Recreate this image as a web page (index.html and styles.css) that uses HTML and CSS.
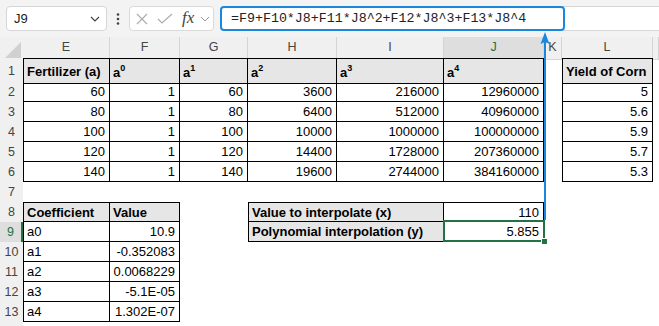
FILE: index.html
```html
<!DOCTYPE html>
<html lang="en">
<head>
    <meta charset="UTF-8">
    <meta name="viewport" content="width=device-width, initial-scale=1.0">
    <title>Polynomial interpolation</title>
    <link rel="stylesheet" href="styles.css">
</head>
<body>
<div class="app">
    <!-- Name box and formula bar -->
    <div class="toolbar">
        <div class="namebox">
            <span>J9</span>
            <svg width="10" height="6" viewBox="0 0 10 6"><path d="M1 1 L5 5 L9 1" fill="none" stroke="#444" stroke-width="1.2"/></svg>
        </div>
        <div class="dots">
            <svg width="4" height="12" viewBox="0 0 4 12"><circle cx="2" cy="1.5" r="1.3" fill="#444"/><circle cx="2" cy="6" r="1.3" fill="#444"/><circle cx="2" cy="10.5" r="1.3" fill="#444"/></svg>
        </div>
        <div class="fxbox">
            <svg class="ico-x" width="12" height="12" viewBox="0 0 12 12"><path d="M1 1 L11 11 M11 1 L1 11" stroke="#ababab" stroke-width="1.1"/></svg>
            <svg class="ico-ok" width="16" height="11" viewBox="0 0 16 11"><path d="M1 6 L5 10 L15 1" fill="none" stroke="#ababab" stroke-width="1.1"/></svg>
            <span class="fx">fx</span>
            <svg class="ico-dd" width="10" height="6" viewBox="0 0 10 6"><path d="M1 1 L5 5 L9 1" fill="none" stroke="#999" stroke-width="1"/></svg>
        </div>
        <div class="formula">
            <div class="formula-input">=F9+F10*J8+F11*J8^2+F12*J8^3+F13*J8^4</div>
        </div>
    </div>

    <!-- Sheet -->
    <div class="sheet">
        <div class="row hdr">
            <div class="corner"><svg width="16" height="16" viewBox="0 0 16 16"><polygon points="16,0 16,16 0,16" fill="#d0d0d0"/></svg></div>
            <div class="ch">E</div>
            <div class="ch">F</div>
            <div class="ch">G</div>
            <div class="ch">H</div>
            <div class="ch">I</div>
            <div class="ch sel">J</div>
            <div class="ch">K</div>
            <div class="ch">L</div>
            <div class="ch"></div>
        </div>

        <div class="row r1">
            <div class="rh">1</div>
            <div class="c t tt tl g b">Fertilizer (a)</div>
            <div class="c t tt g b">a<sup>0</sup></div>
            <div class="c t tt g b">a<sup>1</sup></div>
            <div class="c t tt g b">a<sup>2</sup></div>
            <div class="c t tt g b">a<sup>3</sup></div>
            <div class="c t tt g b">a<sup>4</sup></div>
            <div class="c"></div>
            <div class="c t tt tl g b">Yield of Corn</div>
            <div class="c"></div>
        </div>
        <div class="row">
            <div class="rh">2</div>
            <div class="c t tl n">60</div>
            <div class="c t n">1</div>
            <div class="c t n">60</div>
            <div class="c t n">3600</div>
            <div class="c t n">216000</div>
            <div class="c t n">12960000</div>
            <div class="c"></div>
            <div class="c t tl n">5</div>
            <div class="c"></div>
        </div>
        <div class="row">
            <div class="rh">3</div>
            <div class="c t tl n">80</div>
            <div class="c t n">1</div>
            <div class="c t n">80</div>
            <div class="c t n">6400</div>
            <div class="c t n">512000</div>
            <div class="c t n">40960000</div>
            <div class="c"></div>
            <div class="c t tl n">5.6</div>
            <div class="c"></div>
        </div>
        <div class="row">
            <div class="rh">4</div>
            <div class="c t tl n">100</div>
            <div class="c t n">1</div>
            <div class="c t n">100</div>
            <div class="c t n">10000</div>
            <div class="c t n">1000000</div>
            <div class="c t n">100000000</div>
            <div class="c"></div>
            <div class="c t tl n">5.9</div>
            <div class="c"></div>
        </div>
        <div class="row">
            <div class="rh">5</div>
            <div class="c t tl n">120</div>
            <div class="c t n">1</div>
            <div class="c t n">120</div>
            <div class="c t n">14400</div>
            <div class="c t n">1728000</div>
            <div class="c t n">207360000</div>
            <div class="c"></div>
            <div class="c t tl n">5.7</div>
            <div class="c"></div>
        </div>
        <div class="row">
            <div class="rh">6</div>
            <div class="c t tl n">140</div>
            <div class="c t n">1</div>
            <div class="c t n">140</div>
            <div class="c t n">19600</div>
            <div class="c t n">2744000</div>
            <div class="c t n">384160000</div>
            <div class="c"></div>
            <div class="c t tl n">5.3</div>
            <div class="c"></div>
        </div>
        <div class="row">
            <div class="rh">7</div>
            <div class="c"></div><div class="c"></div><div class="c"></div><div class="c"></div>
            <div class="c"></div><div class="c"></div><div class="c"></div><div class="c"></div><div class="c"></div>
        </div>
        <div class="row">
            <div class="rh">8</div>
            <div class="c t tt tl g b">Coefficient</div>
            <div class="c t tt g b">Value</div>
            <div class="c"></div>
            <div class="c t tt tl g b span2">Value to interpolate (x)</div>
            <div class="c t tt n">110</div>
            <div class="c"></div>
            <div class="c"></div>
            <div class="c"></div>
        </div>
        <div class="row">
            <div class="rh sel">9</div>
            <div class="c t tl">a0</div>
            <div class="c t n">10.9</div>
            <div class="c"></div>
            <div class="c t tl g b span2">Polynomial interpolation (y)</div>
            <div class="c t n active">5.855</div>
            <div class="c"></div>
            <div class="c"></div>
            <div class="c"></div>
        </div>
        <div class="row">
            <div class="rh">10</div>
            <div class="c t tl">a1</div>
            <div class="c t n">-0.352083</div>
            <div class="c"></div><div class="c"></div><div class="c"></div><div class="c"></div>
            <div class="c"></div><div class="c"></div><div class="c"></div>
        </div>
        <div class="row">
            <div class="rh">11</div>
            <div class="c t tl">a2</div>
            <div class="c t n">0.0068229</div>
            <div class="c"></div><div class="c"></div><div class="c"></div><div class="c"></div>
            <div class="c"></div><div class="c"></div><div class="c"></div>
        </div>
        <div class="row">
            <div class="rh">12</div>
            <div class="c t tl">a3</div>
            <div class="c t n">-5.1E-05</div>
            <div class="c"></div><div class="c"></div><div class="c"></div><div class="c"></div>
            <div class="c"></div><div class="c"></div><div class="c"></div>
        </div>
        <div class="row">
            <div class="rh">13</div>
            <div class="c t tl">a4</div>
            <div class="c t n">1.302E-07</div>
            <div class="c"></div><div class="c"></div><div class="c"></div><div class="c"></div>
            <div class="c"></div><div class="c"></div><div class="c"></div>
        </div>
        <div class="row">
            <div class="rh"></div>
            <div class="c"></div><div class="c"></div><div class="c"></div><div class="c"></div>
            <div class="c"></div><div class="c"></div><div class="c"></div><div class="c"></div><div class="c"></div>
        </div>
    </div>

    <!-- Callout arrow from J9 to the formula -->
    <svg class="arrow" width="10" height="188" viewBox="0 0 10 188">
        <polygon points="5,0 0.5,12 5,10 9.5,12" fill="#1b87dc"/>
        <rect x="4" y="9" width="2" height="179" fill="#1b87dc"/>
    </svg>
</div>
</body>
</html>
```

FILE: styles.css
```css
body {
    margin: 0;
    font-family: "Liberation Sans", Arial, sans-serif;
}
.app {
    position: relative;
    width: 659px;
    height: 326px;
    overflow: hidden;
    background-color: #fff;
}

/* toolbar */
.toolbar {
    display: flex;
    align-items: flex-start;
    height: 37px;
    box-sizing: border-box;
    padding: 6px 0 0 6px;
    background-color: #f3f3f3;
}
.namebox {
    width: 101px;
    height: 25px;
    box-sizing: border-box;
    display: flex;
    align-items: center;
    justify-content: space-between;
    padding: 0 6px 0 7px;
    background-color: #fff;
    border: 1px solid #d6d6d6;
    border-radius: 4px;
    font-size: 13px;
    color: #222;
}
.dots {
    width: 22px;
    display: flex;
    justify-content: center;
    padding-top: 7px;
}
.fxbox {
    width: 85px;
    height: 25px;
    box-sizing: border-box;
    display: flex;
    align-items: center;
    padding-left: 6px;
    background-color: #fff;
    border: 1px solid #dadada;
    border-radius: 4px;
}
.ico-x {
    margin-right: 9px;
}
.ico-ok {
    margin-right: 9px;
}
.fx {
    font-family: "Liberation Serif", serif;
    font-style: italic;
    font-size: 17px;
    color: #444;
    width: 17px;
    margin-top: -2px;
}
.ico-dd {
    margin-left: 1px;
}
.formula {
    flex: 1;
    margin-left: 6px;
    margin-right: -10px;
    height: 25px;
    box-sizing: border-box;
    background-color: #fff;
    border: 1px solid #d6d6d6;
    border-radius: 4px;
}
.formula-input {
    width: 345px;
    height: 25px;
    box-sizing: border-box;
    margin: -1px 0 0 -1px;
    padding-left: 9px;
    border: 2px solid #1b87dc;
    border-radius: 4px;
    font-family: "Liberation Mono", monospace;
    font-size: 13.3px;
    line-height: 21px;
    color: #222;
}

/* sheet */
.row {
    display: grid;
    grid-template-columns: 23px 87px 70px 68px 89px 107px 100px 18px 91px 1fr;
    height: 20px;
}
.row.hdr {
    height: 21px;
}
.row.r1 {
    height: 24px;
}
.corner {
    background-color: #f0f0f0;
    display: flex;
    align-items: flex-end;
    justify-content: flex-end;
    padding: 0 2px 2px 0;
}
.ch {
    background-color: #f0f0f0;
    border-right: 1px solid #d4d4d4;
    border-bottom: 1px solid #d4d4d4;
    box-sizing: border-box;
    text-align: center;
    font-size: 12.5px;
    line-height: 21px;
    color: #444;
}
.ch.sel {
    background-color: #dedede;
    border-bottom: 2px solid #217346;
    color: #217346;
}
.rh {
    background-color: #f0f0f0;
    text-align: center;
    font-size: 12.5px;
    line-height: 20px;
    color: #444;
    box-sizing: border-box;
}
.r1 .rh {
    line-height: 26px;
}
.rh.sel {
    background-color: #dedede;
    border-right: 2px solid #217346;
    color: #217346;
}
.c {
    box-sizing: border-box;
    padding: 2px 4px 0 3px;
    font-size: 13px;
    line-height: 16px;
    color: #000;
    white-space: nowrap;
}
.r1 .c {
    padding-top: 5px;
}
.t {
    border-right: 1px solid #000;
    border-bottom: 1px solid #000;
}
.tt {
    border-top: 1px solid #000;
}
.tl {
    border-left: 1px solid #000;
}
.g {
    background-color: #e7e6e6;
}
.b {
    font-weight: bold;
}
.n {
    text-align: right;
}
.span2 {
    grid-column: span 2;
}
.c sup {
    font-size: 9px;
    line-height: 1;
    vertical-align: 6px;
}
.active {
    position: relative;
}
.active::after {
    content: '';
    position: absolute;
    top: -2px;
    left: -1px;
    right: -2px;
    bottom: -1px;
    border: 2px solid #217346;
}
.active::before {
    content: '';
    position: absolute;
    right: -5px;
    bottom: -4px;
    width: 5px;
    height: 5px;
    background-color: #217346;
    border: 1px solid #fff;
    z-index: 1;
}
.arrow {
    position: absolute;
    left: 540px;
    top: 32px;
}
```
